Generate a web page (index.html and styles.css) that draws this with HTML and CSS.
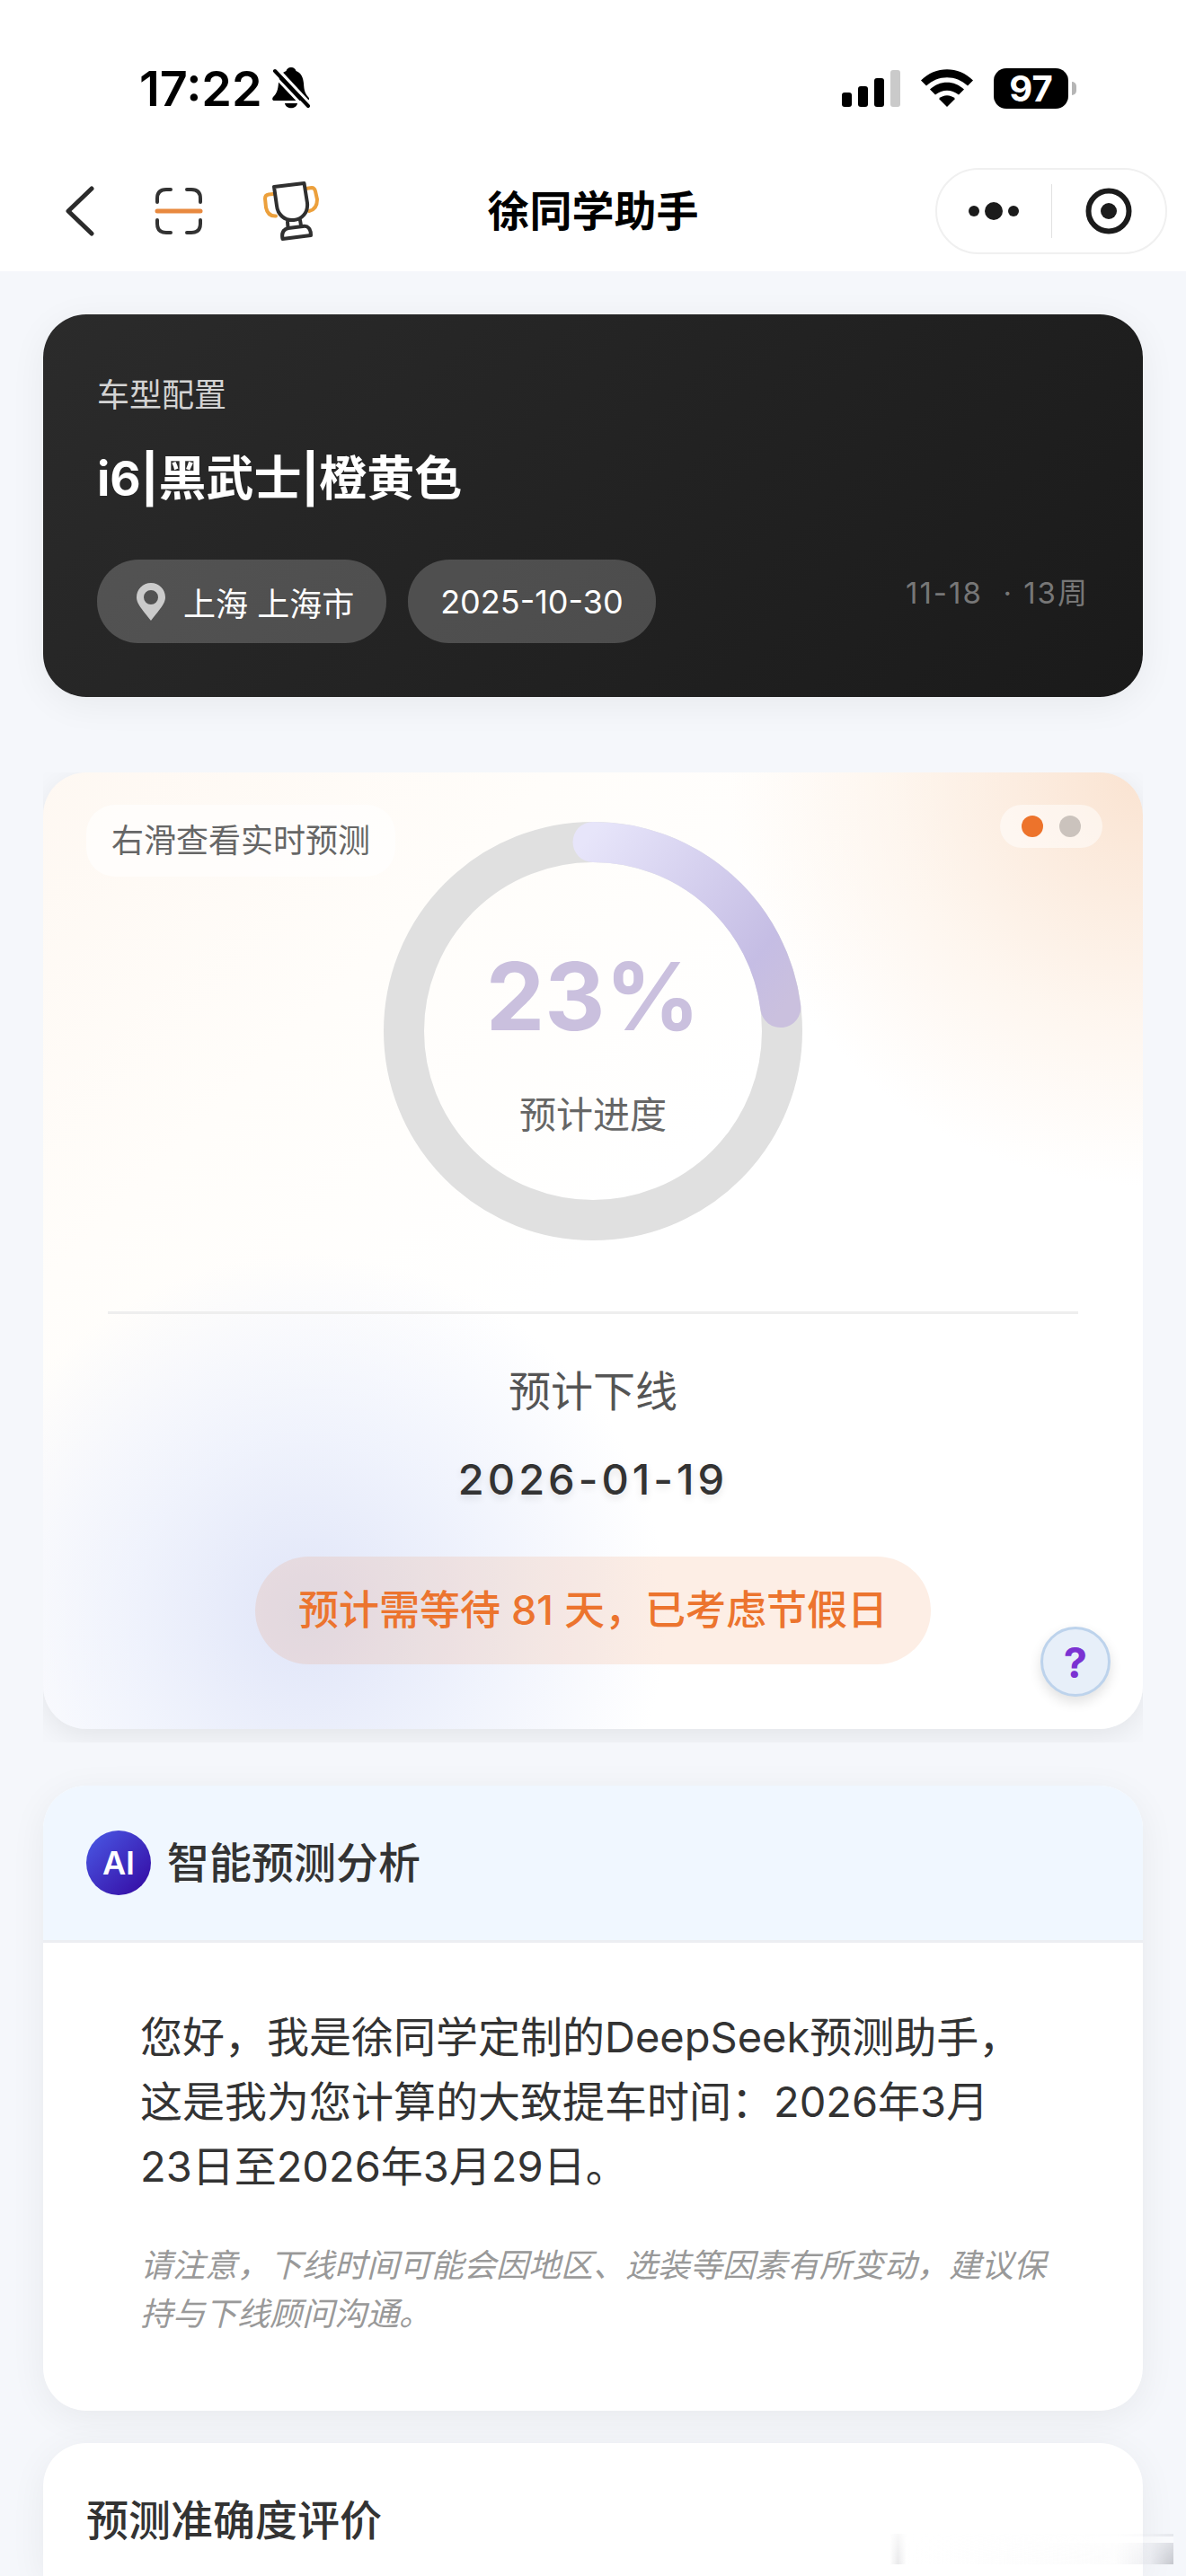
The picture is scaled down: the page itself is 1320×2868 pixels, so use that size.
FILE: index.html
```
<!DOCTYPE html>
<html lang="zh-CN">
<head>
    <meta charset="UTF-8">
    <meta name="viewport" content="width=device-width, initial-scale=1.0">
    <title>徐同学助手</title>
    <link rel="stylesheet" href="styles.css">
</head>

<body>
    <header class="top">
        <div class="status-bar">
            <div class="status-left">
                <span class="clock">17:22</span>
                <svg width="42" height="46" viewBox="0 0 42 46">
                    <path d="M21 0c3 0 5 2 5.500 4c6 2 8 8 8.500 14c.5 8 1.500 11 5 15c2 2 1 4-1.500 4h-36c-2.500 0-3-2-1.500-4c4-4 5.500-8 6-16c.3-6 3-11 8.500-13c.5-2 2.500-4 5.500-4z" fill="#000"/>
                    <path d="M14 40h14c-1 7-13 7-14 0z" fill="#000"/>
                    <path d="M6 2L43 42" stroke="#fff" stroke-width="4"/>
                    <path d="M0 7L37 46" stroke="#fff" stroke-width="3"/>
                    <path d="M3 4L40 43" stroke="#000" stroke-width="4" stroke-linecap="round"/>
                </svg>
            </div>
            <div class="status-right">
                <svg width="65" height="42" viewBox="0 0 65 42">
                    <rect x="0" y="26" width="11" height="16" rx="3"/>
                    <rect x="18" y="19" width="11" height="23" rx="3"/>
                    <rect x="36" y="10" width="11" height="32" rx="3"/>
                    <rect x="54" y="1" width="11" height="41" rx="3" fill="#cacaca"/>
                </svg>
                <svg width="58" height="42" viewBox="0 0 58 42">
                    <path d="M0 12.500C16-4 42-4 58 12.500L52 18.500C39 6 19 6 6 18.500z"/>
                    <path d="M10 22.500C21 12 37 12 48 22.500L42 28.500C34 22 24 22 16 28.500z"/>
                    <path d="M20 33C25 28 33 28 38 33L29 42z"/>
                </svg>
                <div class="battery"><span>97</span></div>
            </div>
        </div>

        <nav class="nav-bar">
            <div class="nav-left">
                <button class="icon-btn" aria-label="返回">
                    <svg width="32" height="56" viewBox="0 0 32 56" fill="none" stroke="#2b2b2b" stroke-width="5" stroke-linecap="round" stroke-linejoin="round">
                        <path d="M29 3L3 28L29 53"/>
                    </svg>
                </button>
                <button class="icon-btn" aria-label="扫一扫">
                    <svg width="54" height="54" viewBox="0 0 54 54" fill="none" stroke="#333" stroke-width="4" stroke-linecap="round">
                        <path d="M3 17V13C3 6 7 3 13 3H18M36 3H41C47 3 51 6 51 13V17M51 37V41C51 48 47 51 41 51H36M18 51H13C7 51 3 48 3 41V37"/>
                        <path d="M3 27H51" stroke="#e8893f" stroke-width="5"/>
                    </svg>
                </button>
                <button class="icon-btn" aria-label="排行">
                    <svg width="62" height="66" viewBox="0 0 62 66" fill="none" stroke="#2f2f2f" stroke-width="4" stroke-linecap="round" stroke-linejoin="round">
                        <path d="M11 14L6 14.500Q2 15 2 19L3 29Q5 39 14 38.500M47 8L54 7Q57 7 58 11L60 20Q60 31 51 33" stroke="#eca03c"/>
                        <path d="M12 6L45.500 2L49 24C50 35 43 42 34 43C24 44 16 37 15 27z"/>
                        <path d="M27 45L27.500 51M41 43L42 49"/>
                        <path d="M21.500 64C20 56 23 53 28 52L44 50C50 49 53 53 53 60z"/>
                    </svg>
                </button>
            </div>
            <h1 class="nav-title">徐同学助手</h1>
            <div class="capsule">
                <button class="capsule-btn" aria-label="更多">
                    <svg width="58" height="22" viewBox="0 0 58 22" fill="#1b1b1b">
                        <circle cx="7" cy="11" r="6"/>
                        <circle cx="29" cy="11" r="10"/>
                        <circle cx="51" cy="11" r="6"/>
                    </svg>
                </button>
                <button class="capsule-btn" aria-label="关闭">
                    <svg width="52" height="52" viewBox="0 0 52 52">
                        <circle cx="26" cy="26" r="22.500" fill="none" stroke="#1b1b1b" stroke-width="6"/>
                        <circle cx="26" cy="26" r="9" fill="#1b1b1b"/>
                    </svg>
                </button>
            </div>
        </nav>
    </header>

    <main class="content">
        <section class="car-card">
            <p class="car-label">车型配置</p>
            <h2 class="car-name">i6|黑武士|橙黄色</h2>
            <div class="car-info">
                <span class="chip">
                    <svg width="32" height="42" viewBox="0 0 32 42">
                        <path fill-rule="evenodd" d="M16 0C25 0 32 7 32 16C32 22 28 27 16 42C4 27 0 22 0 16C0 7 7 0 16 0zM16 8a8 8 0 1 0 0 16a8 8 0 1 0 0-16z" fill="#cbcbcb"/>
                    </svg>
                    上海 上海市
                </span>
                <span class="chip">2025-10-30</span>
                <span class="car-week">11-18 &nbsp;· 13周</span>
            </div>
        </section>

        <div class="swiper">
            <section class="progress-card">
                <span class="swipe-tip">右滑查看实时预测</span>
                <div class="dots">
                    <span class="dot active"></span>
                    <span class="dot"></span>
                </div>

                <div class="ring">
                    <svg width="466" height="466" viewBox="0 0 466 466" fill="none" stroke-width="45">
                        <defs>
                            <linearGradient id="ringColor" gradientUnits="userSpaceOnUse" x1="225" y1="20" x2="450" y2="200">
                                <stop offset="0" stop-color="#e7e5fa"/>
                                <stop offset="0.8" stop-color="#c5bde4"/>
                                <stop offset="1" stop-color="#cac0de"/>
                            </linearGradient>
                        </defs>
                        <circle cx="233" cy="233" r="210.500" stroke="#e0e0e0"/>
                        <path d="M233 22.500A210.500 210.500 0 0 1 441.800 206.600" stroke="url(#ringColor)" stroke-linecap="round"/>
                    </svg>
                    <div class="ring-text">
                        <strong class="percent">23%</strong>
                        <span class="percent-label">预计进度</span>
                    </div>
                </div>

                <div class="offline">
                    <p class="offline-label">预计下线</p>
                    <p class="offline-date">2026-01-19</p>
                    <p class="wait">预计需等待 81 天，已考虑节假日</p>
                </div>

                <button class="help">?</button>
            </section>
        </div>

        <section class="card ai-card">
            <div class="ai-header">
                <span class="ai-badge">AI</span>
                <h2 class="card-title">智能预测分析</h2>
            </div>
            <div class="ai-body">
                <p class="ai-text">您好，我是徐同学定制的DeepSeek预测助手，这是我为您计算的大致提车时间：2026年3月23日至2026年3月29日。</p>
                <p class="ai-note">请注意，下线时间可能会因地区、选装等因素有所变动，建议保持与下线顾问沟通。</p>
            </div>
        </section>

        <section class="card rate-card">
            <h2 class="card-title">预测准确度评价</h2>
        </section>
    </main>

    <div class="smudge"></div>
</body>
</html>
```
FILE: styles.css
```
* {
    margin: 0;
    padding: 0;
    box-sizing: border-box;
}

body {
    display: flex;
    flex-direction: column;
    min-height: 100vh;
    position: relative;
    font-family: Inter, "Noto Sans CJK SC", sans-serif;
    background-color: #f5f7fb;
    color: #333;
}

button {
    border: none;
    background: none;
    font-family: inherit;
    cursor: pointer;
}

svg {
    display: block;
}

/* top bar */
.top {
    background-color: #fff;
}

.status-bar {
    display: flex;
    justify-content: space-between;
    padding: 64px 121px 0 155px;
    height: 132px;
}

.status-left,
.status-right {
    display: flex;
    align-items: center;
}

.status-left {
    gap: 11px;
}

.status-right {
    gap: 23px;
}

.clock {
    font-size: 54px;
    font-weight: 600;
    color: #000;
}

.battery {
    position: relative;
    width: 83px;
    height: 45px;
    margin-right: 10px;
    border-radius: 14px;
    background-color: #000;
    color: #fff;
    font-size: 40px;
    font-weight: 700;
    line-height: 45px;
    text-align: center;
}

.battery::after {
    content: "";
    position: absolute;
    right: -9px;
    top: 15px;
    width: 5px;
    height: 15px;
    border-radius: 0 5px 5px 0;
    background-color: #b5b5b5;
}

.nav-bar {
    display: grid;
    grid-template-columns: 1fr auto 1fr;
    align-items: center;
    padding: 55px 21px 19px;
}

.nav-left {
    display: flex;
    align-items: center;
    gap: 67px;
    padding-left: 52px;
}

.nav-title {
    font-size: 47px;
    font-weight: 700;
    line-height: 66px;
    color: #000;
}

.capsule {
    justify-self: end;
    display: flex;
    align-items: center;
    width: 258px;
    height: 96px;
    border: 2px solid #f0f0f0;
    border-radius: 48px;
}

.capsule-btn {
    flex: 1;
    display: flex;
    align-items: center;
    justify-content: center;
    height: 60px;
}

.capsule-btn + .capsule-btn {
    border-left: 1px solid #e2e2e2;
}

/* page */
.content {
    flex: 1;
    display: flex;
    flex-direction: column;
    padding: 48px 48px 0;
}

.car-card {
    padding: 64px 60px 60px;
    margin-bottom: 84px;
    border-radius: 48px;
    background: linear-gradient(135deg, #2b2b2b, #1a1a1a);
    box-shadow: 0 8px 40px rgba(0, 0, 0, 0.06);
    color: #fff;
}

.car-label {
    font-size: 36px;
    line-height: 53px;
    color: #d3d3d3;
}

.car-name {
    margin: 28px 0 52px;
    font-size: 53px;
    font-weight: 700;
    line-height: 76px;
}

.car-info {
    display: flex;
    gap: 24px;
}

.chip {
    display: flex;
    align-items: center;
    gap: 20px;
    height: 93px;
    padding: 0 36px;
    border-radius: 46px;
    background-color: rgba(255, 255, 255, 0.2);
    font-size: 36px;
}

.chip svg {
    margin-left: 8px;
}

.car-week {
    margin-left: auto;
    font-size: 33px;
    line-height: 74px;
    letter-spacing: 2px;
    color: #777;
}

.swiper {
    overflow: hidden;
    padding-bottom: 15px;
    margin-bottom: 48px;
}

.progress-card {
    position: relative;
    display: flex;
    flex-direction: column;
    align-items: center;
    padding: 55px 72px 72px;
    border-radius: 48px;
    background:
        radial-gradient(circle 460px at 100% 0, #fae3d1, rgba(253, 240, 228, 0.6) 60%, rgba(255, 255, 255, 0)),
        radial-gradient(circle 400px at 24% 88%, #e0e5f8, rgba(236, 240, 252, 0.8) 50%, rgba(255, 255, 255, 0)),
        linear-gradient(135deg, #fef8f2, #fffdfa 25%, #fff 50%);
    box-shadow: 0 8px 32px rgba(0, 0, 0, 0.08);
}

.swipe-tip {
    position: absolute;
    left: 48px;
    top: 36px;
    padding: 0 28px;
    border-radius: 32px;
    background-color: rgba(255, 255, 255, 0.6);
    font-size: 36px;
    line-height: 80px;
    color: #666;
}

.dots {
    position: absolute;
    right: 45px;
    top: 36px;
    display: flex;
    gap: 18px;
    padding: 12px 24px;
    border-radius: 24px;
    background-color: rgba(255, 255, 255, 0.5);
}

.dot {
    width: 24px;
    height: 24px;
    border-radius: 50%;
    background-color: #cbc3bd;
}

.dot.active {
    background-color: #ed732b;
}

.ring {
    display: grid;
    justify-items: center;
}

.ring svg,
.ring-text {
    grid-area: 1 / 1;
}

.ring-text {
    display: flex;
    flex-direction: column;
    align-items: center;
    gap: 54px;
    padding-top: 141px;
}

.percent {
    font-size: 104px;
    font-weight: 700;
    line-height: 106px;
    color: #cac0de;
}

.percent-label {
    font-size: 41px;
    line-height: 50px;
    color: #666;
}

.offline {
    align-self: stretch;
    display: flex;
    flex-direction: column;
    align-items: center;
    margin-top: 79px;
    padding-top: 53px;
    border-top: 3px solid #eee;
}

.offline-label {
    font-size: 47px;
    line-height: 66px;
    color: #555;
}

.offline-date {
    margin: 32px 0 53px;
    font-size: 47px;
    font-weight: 500;
    line-height: 66px;
    letter-spacing: 4px;
    text-shadow: 0 4px 8px rgba(0, 0, 0, 0.1);
}

.wait {
    padding: 0 48px;
    border-radius: 60px;
    background-color: rgba(237, 115, 43, 0.12);
    font-size: 45px;
    font-weight: 500;
    line-height: 120px;
    color: #ec742e;
}

.help {
    position: absolute;
    right: 36px;
    bottom: 36px;
    width: 78px;
    height: 78px;
    border: 3px solid #bdd3ec;
    border-radius: 50%;
    background-color: #e7eff9;
    box-shadow: 0 6px 14px rgba(0, 0, 0, 0.12);
    font-size: 47px;
    font-weight: 700;
    color: #7b32d2;
}

.card {
    border-radius: 48px;
    background-color: #fff;
    box-shadow: 0 8px 40px rgba(0, 0, 0, 0.06);
}

.card-title {
    font-size: 47px;
    font-weight: 500;
    line-height: 76px;
}

.ai-card {
    margin-bottom: 36px;
}

.ai-header {
    display: flex;
    align-items: center;
    gap: 18px;
    padding: 48px;
    border-bottom: 3px solid #eceef2;
    border-radius: 48px 48px 0 0;
    background-color: #f0f7ff;
}

.ai-badge {
    width: 72px;
    height: 72px;
    border-radius: 50%;
    background: linear-gradient(135deg, #4a5be6, #3407a0);
    color: #fff;
    font-size: 36px;
    font-weight: 600;
    line-height: 72px;
    text-align: center;
}

.ai-body {
    padding: 69px 108px 81px;
}

.ai-text {
    margin-bottom: 47px;
    padding-right: 16px;
    font-size: 47px;
    line-height: 72px;
}

.ai-note {
    font-size: 36px;
    font-style: italic;
    line-height: 54px;
    color: #999;
}

.rate-card {
    flex: 1;
    padding: 48px 48px 0;
    border-radius: 48px 48px 0 0;
}

/* faint blurred strip over the bottom right corner */
.smudge {
    position: absolute;
    right: 14px;
    bottom: 13px;
    width: 316px;
    height: 34px;
    background:
        linear-gradient(90deg, rgba(255, 255, 255, 0), #fff 60%) right 3px / 200px 7px no-repeat,
        linear-gradient(90deg, rgba(200, 200, 204, 0), rgba(200, 200, 204, 0.4) 3%, rgba(200, 200, 204, 0) 6%, rgba(240, 240, 242, 0.2) 80%, rgba(225, 226, 232, 0.6) 92%, rgba(185, 187, 194, 0.8));
    -webkit-mask-image: linear-gradient(rgba(0, 0, 0, 0.3), #000);
    mask-image: linear-gradient(rgba(0, 0, 0, 0.3), #000);
}
```
